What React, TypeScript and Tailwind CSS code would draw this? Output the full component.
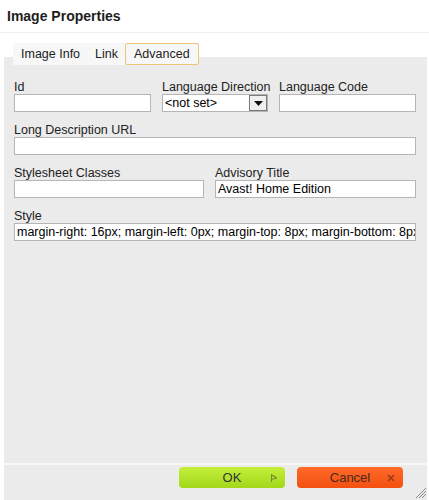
import React from "react";

const font = { fontFamily: '"Liberation Sans", Arial, sans-serif' };

function Field({
  label,
  width,
  value,
}: {
  label: string;
  width: string;
  value?: string;
}) {
  return (
    <div className={`flex flex-col ${width}`}>
      <label className="text-[12.5px] leading-[13px] pt-[2px] text-[#222] whitespace-nowrap">{label}</label>
      <div className="h-[18px] bg-white border border-[#b5b5b5] px-[2px] text-[12.5px] leading-[16px] text-black overflow-hidden whitespace-nowrap">
        {value}
      </div>
    </div>
  );
}

export default function App() {
  return (
    <div className="w-[429px] h-[500px] bg-white flex flex-col overflow-hidden" style={font}>
      <div className="h-[33px] px-[7px] flex items-center border-b border-[#f0f0f0]">
        <h1 className="text-[14px] font-bold text-[#1e1e1e]">Image Properties</h1>
      </div>

      <div className="flex-1 flex flex-col pl-[4px] pr-[2px] pt-[10px]">
        {/* tabs */}
        <div className="h-[22px] flex pl-[9px] bg-[linear-gradient(to_bottom,#ffffff_14px,#ebebeb_14px)]">
          <div className="px-[8px] flex items-center bg-[#f7f7f7] text-[12.5px] text-[#222]">Image Info</div>
          <div className="px-[7px] flex items-center bg-[#f7f7f7] text-[12.5px] text-[#222]">Link</div>
          <div className="px-[8px] flex items-center bg-[#f7f7f7] border border-[#f0c27a] rounded-[2px] text-[12.5px] text-[#222]">
            Advanced
          </div>
        </div>

        {/* fields */}
        <div className="flex-1 bg-[#ebebeb] flex flex-col gap-[10px] px-[10px] pt-[14px]">
          <div className="flex gap-[11px]">
            <Field label="Id" width="w-[137px]" />
            <div className="flex flex-col w-[106px]">
              <label className="text-[12.5px] leading-[13px] pt-[2px] text-[#222] whitespace-nowrap">Language Direction</label>
              <div className="h-[18px] bg-white border border-[#b5b5b5] flex items-stretch">
                <span className="flex-1 px-[2px] text-[12.5px] leading-[16px] text-black">&lt;not set&gt;</span>
                <span className="w-[18px] bg-[#efefef] border border-[#7a7a7a] flex items-center justify-center">
                  <svg width="9" height="5" viewBox="0 0 9 5">
                    <path d="M0 0h9L4.5 5z" fill="#111" />
                  </svg>
                </span>
              </div>
            </div>
            <Field label="Language Code" width="w-[137px]" />
          </div>

          <Field label="Long Description URL" width="w-[402px]" />

          <div className="flex gap-[11px]">
            <Field label="Stylesheet Classes" width="w-[190px]" />
            <Field label="Advisory Title" width="w-[201px]" value="Avast! Home Edition" />
          </div>

          <Field
            label="Style"
            width="w-[402px]"
            value="margin-right: 16px; margin-left: 0px; margin-top: 8px; margin-bottom: 8px;"
          />
        </div>

        {/* footer */}
        <div className="h-[37px] bg-[#ebebeb] border-t-2 border-[#f7f7f7] relative">
          <div className="flex gap-[12px] pl-[175px] pt-[2px]">
            <button className="w-[106px] h-[21px] rounded-[4px] bg-[linear-gradient(to_bottom,#c4ef3c,#a2d81a)] text-[13px] text-[#333] relative flex items-center justify-center">
              OK
              <svg className="absolute right-[8px] top-[7px]" width="6" height="8" viewBox="0 0 6 8">
                <path d="M0.5 0v8M0.5 0.5l5 3.5-5 1.5" stroke="#7a8a30" strokeWidth="1.2" fill="none" />
              </svg>
            </button>
            <button className="w-[106px] h-[21px] rounded-[4px] bg-[linear-gradient(to_bottom,#ff6a2b,#f2500f)] text-[13px] text-[#4a2a1c] relative flex items-center justify-center">
              Cancel
              <svg className="absolute right-[8px] top-[7px]" width="8" height="8" viewBox="0 0 8 8">
                <path d="M1 1l6 6M7 1l-6 6" stroke="#9a3a18" strokeWidth="1.6" />
              </svg>
            </button>
          </div>
          <svg className="absolute right-[1px] bottom-[2px]" width="11" height="11" viewBox="0 0 11 11">
            <path d="M11 1L1 11M11 4L4 11M11 7L7 11" stroke="#8a8a8a" strokeWidth="1" />
          </svg>
        </div>
      </div>
    </div>
  );
}
